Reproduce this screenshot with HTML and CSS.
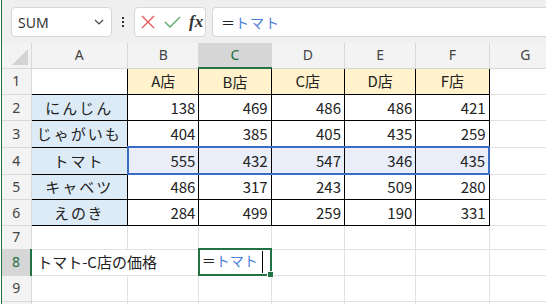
FILE: index.html
```html
<!DOCTYPE html>
<html lang="ja">
<head>
<meta charset="utf-8">
<title>トマト-C店の価格</title>
<link rel="stylesheet" href="styles.css">
</head>
<body>
<div class="app">
	<!-- formula bar -->
	<div class="fbar">
		<div class="namebox">
			<span>SUM</span>
			<svg class="chev" width="10" height="6" viewBox="0 0 10 6"><path d="M1 1 L5 5 L9 1" fill="none" stroke="#444" stroke-width="1.2"/></svg>
		</div>
		<div class="dots">
			<i></i><i></i><i></i>
		</div>
		<div class="btns">
			<svg width="14" height="14" viewBox="0 0 14 14"><path d="M1 1 L13 13 M13 1 L1 13" stroke="#e65c5c" stroke-width="1.4" fill="none"/></svg>
			<svg width="17" height="14" viewBox="0 0 17 14"><path d="M1 7 L6 12 L16 2" stroke="#5aaa6a" stroke-width="1.4" fill="none"/></svg>
			<span class="fx">fx</span>
		</div>
		<div class="formula">＝<span class="ref">トマト</span></div>
	</div>

	<table class="sheet">
		<colgroup>
			<col class="w-hd"><col class="w-a"><col class="w-b"><col class="w-c"><col class="w-d"><col class="w-e"><col class="w-f"><col class="w-g">
		</colgroup>
		<tr class="colhd">
			<th class="corner"><span class="tri"></span></th>
			<th>A</th><th>B</th><th class="on">C</th><th>D</th><th>E</th><th>F</th><th>G</th>
		</tr>
		<tr class="r26">
			<th class="rowhd">1</th>
			<td class="bx"></td>
			<td class="bx shop">A店</td><td class="bx shop">B店</td><td class="bx shop">C店</td><td class="bx shop">D店</td><td class="bx shop">F店</td>
			<td></td>
		</tr>
		<tr class="r26">
			<th class="rowhd">2</th>
			<td class="bx veg">にんじん</td>
			<td class="bx num">138</td><td class="bx num">469</td><td class="bx num">486</td><td class="bx num">486</td><td class="bx num">421</td>
			<td></td>
		</tr>
		<tr class="r26">
			<th class="rowhd">3</th>
			<td class="bx veg">じゃがいも</td>
			<td class="bx num">404</td><td class="bx num">385</td><td class="bx num">405</td><td class="bx num">435</td><td class="bx num">259</td>
			<td></td>
		</tr>
		<tr class="r26">
			<th class="rowhd">4</th>
			<td class="bx veg">トマト</td>
			<td class="bx num hl hl-l">555</td><td class="bx num hl">432</td><td class="bx num hl">547</td><td class="bx num hl">346</td><td class="bx num hl hl-r">435</td>
			<td></td>
		</tr>
		<tr class="r25">
			<th class="rowhd">5</th>
			<td class="bx veg">キャベツ</td>
			<td class="bx num">486</td><td class="bx num">317</td><td class="bx num">243</td><td class="bx num">509</td><td class="bx num">280</td>
			<td></td>
		</tr>
		<tr class="r26">
			<th class="rowhd">6</th>
			<td class="bx veg">えのき</td>
			<td class="bx num">284</td><td class="bx num">499</td><td class="bx num">259</td><td class="bx num">190</td><td class="bx num">331</td>
			<td></td>
		</tr>
		<tr class="r22">
			<th class="rowhd">7</th>
			<td></td><td></td><td></td><td></td><td></td><td></td><td></td>
		</tr>
		<tr class="r8">
			<th class="rowhd on">8</th>
			<td class="label" colspan="2">トマト-C店の価格</td>
			<td class="active">＝<span class="ref">トマト</span><span class="caret"></span></td>
			<td></td><td></td><td></td><td></td>
		</tr>
		<tr class="r26">
			<th class="rowhd">9</th>
			<td></td><td></td><td></td><td></td><td></td><td></td><td></td>
		</tr>
		<tr class="r26">
			<th class="rowhd"></th>
			<td></td><td></td><td></td><td></td><td></td><td></td><td></td>
		</tr>
	</table>
</div>
</body>
</html>
```

FILE: styles.css
```css
html, body {margin:0; padding:0; background:#fff; overflow:hidden;}
body {width:546px; height:304px; font-family:"Noto Sans CJK JP", "Noto Sans", sans-serif; color:#222;}
.app {border-left:1px solid #217346; margin-left:1px; height:304px; overflow:hidden;}

/* formula bar */
.fbar {height:43px; background:#efefef; display:flex; align-items:center; box-sizing:border-box; padding-left:9px;}
.namebox {width:101px; height:30px; box-sizing:border-box; background:#fff; border:1px solid #d6d6d6; border-radius:4px;
	display:flex; align-items:center; justify-content:space-between; padding:0 7px 0 6px;
	font-family:"Noto Sans", sans-serif; font-size:14px; color:#333;}
.namebox span {margin-top:1px;}
.dots {width:22px; display:flex; flex-direction:column; align-items:center; gap:2px;}
.dots i {display:block; width:2px; height:2px; background:#333;}
.btns {width:72px; height:30px; box-sizing:border-box; background:#fff; border:1px solid #d6d6d6; border-radius:4px;
	display:flex; align-items:center; gap:9px; padding-left:6px;}
.fx {font-family:"Liberation Serif", serif; font-style:italic; font-weight:bold; font-size:17px; color:#333; margin-left:-1px;}
.formula {flex:1; height:30px; box-sizing:border-box; margin-left:6px; background:#fff; border:1px solid #d6d6d6; border-right:none;
	border-radius:4px 0 0 4px; padding-left:8px; font-size:14px; line-height:28px; color:#222;}
.formula .ref {letter-spacing:1px;}
.ref {color:#4a7fd6;}

/* sheet */
.sheet {border-collapse:collapse; table-layout:fixed; width:560px; font-size:15px;}
.w-hd {width:29px;} .w-a {width:96px;} .w-b {width:71px;} .w-c {width:72px;}
.w-d {width:73px;} .w-e {width:71px;} .w-f {width:73px;} .w-g {width:72px;}
.sheet td, .sheet th {border:1px solid #e1e1e1; padding:0 4px; line-height:18px; white-space:nowrap; overflow:hidden;}
.colhd th {height:24px; background:#f3f3f3; border-color:#d8d8d8; border-top:none; font-weight:normal; color:#444;
	font-family:"Noto Sans", sans-serif; font-size:14px;}
.colhd th.on {background:#d6d6d6; color:#1e6e42; border-bottom:2px solid #217346;}
.corner {position:relative; border-left:none !important;}
.tri {position:absolute; right:3px; bottom:3px; width:0; height:0; border-left:16px solid transparent; border-bottom:16px solid #d4d4d4;}
.rowhd {background:#f3f3f3; border-color:#d8d8d8 !important; border-left:none !important; font-weight:normal; color:#444;
	font-family:"Noto Sans", sans-serif; font-size:14px; padding:0 !important; text-align:center;}
.rowhd.on {background:#d6d6d6; color:#1e6e42; border-right:2px solid #217346 !important;}
.r22 th, .r22 td {height:22px;}
.r25 th, .r25 td {height:24px;}
.r26 th, .r26 td {height:25px;}
.r8 th, .r8 td {height:24px;}

.sheet td.bx {border-color:#000;}
.shop {background:#fff2cc; text-align:center;}
.veg {background:#ddebf7; text-align:center; letter-spacing:2px;}
.num {text-align:right; padding-right:3px !important;}
.hl {background:#e9eef8; border-top:2px solid #3a6cc4 !important; border-bottom:2px solid #3a6cc4 !important;}
.hl-l {border-left:2px solid #3a6cc4 !important;}
.hl-r {border-right:2px solid #3a6cc4 !important;}

.label {padding-left:5px !important; overflow:visible !important;}
.active {position:relative; border:2px solid #217346 !important; padding-left:2px !important; font-size:14px; overflow:visible !important;}
.active::after {content:""; position:absolute; right:-4px; bottom:-4px; width:5px; height:5px; background:#217346; border:1px solid #fff;}
.caret {display:inline-block; width:1px; height:22px; background:#000; vertical-align:middle; margin-left:4px;}
```
